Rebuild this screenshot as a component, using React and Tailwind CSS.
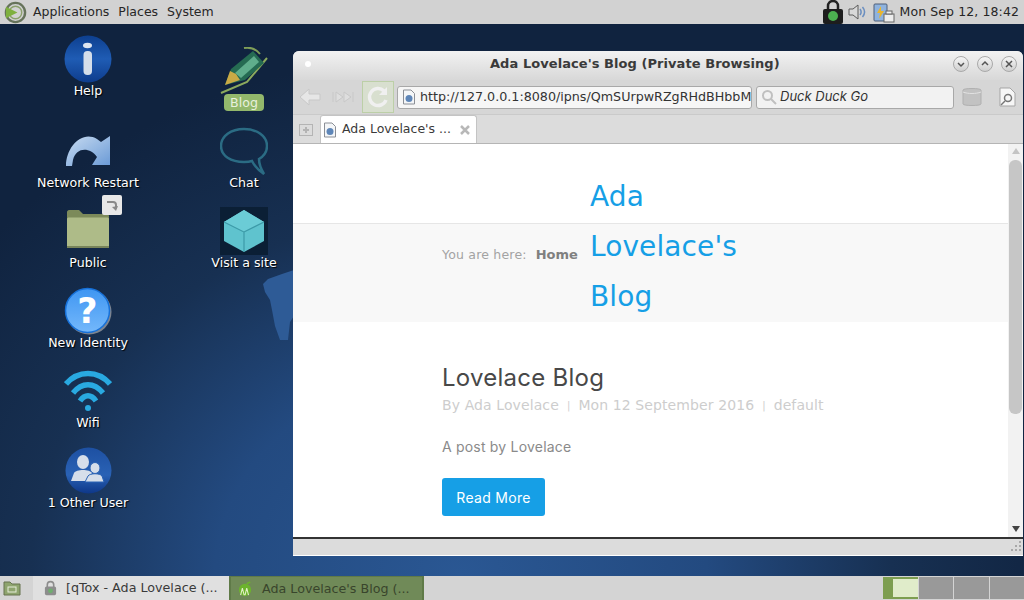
const dejavu = "font-['DejaVu_Sans',sans-serif]";

function HelpIcon() {
  return (
    <svg viewBox="0 0 48 48" className="h-12 w-12">
      <defs>
        <linearGradient id="helpBlue" x1="0" y1="0" x2="0" y2="1">
          <stop offset="0" stopColor="#0d3f8f" />
          <stop offset="0.5" stopColor="#1f5cb4" />
          <stop offset="1" stopColor="#0e3c8c" />
        </linearGradient>
      </defs>
      <circle cx="24" cy="24" r="23.5" fill="url(#helpBlue)" />
      <ellipse cx="23.5" cy="10.5" rx="4.5" ry="2.8" fill="#dfe6f0" />
      <rect x="19.5" y="16" width="8.5" height="24" rx="4" fill="#d5deea" />
    </svg>
  );
}

function RestartIcon() {
  return (
    <svg viewBox="0 0 48 48" className="h-12 w-12">
      <defs>
        <linearGradient id="restartBlue" x1="0" y1="0" x2="1" y2="1">
          <stop offset="0" stopColor="#c9dcf1" />
          <stop offset="1" stopColor="#6a9ad6" />
        </linearGradient>
      </defs>
      <path d="M2 39C2 20 18 3 33 12L37 15L46 9V38H28L33 30C26 20 12 20 9 33L8 39Z" fill="url(#restartBlue)" />
    </svg>
  );
}

function FolderIcon() {
  return (
    <svg viewBox="0 0 48 48" className="h-12 w-12">
      <path d="M3 5C3 4 4 3 5 3H15L19 7H43C44 7 45 8 45 9V20H3Z" fill="#7c8a5a" />
      <path d="M3 12C3 11 4 10.500 5 10.500H43C44 10.500 45 11 45 12V39C45 40 44 41 43 41H5C4 41 3 40 3 39Z" fill="#aebb88" />
      <rect x="3" y="39" width="42" height="2" fill="#78845a" />
    </svg>
  );
}

function QuestionIcon() {
  return (
    <svg viewBox="0 0 48 48" className="h-12 w-12">
      <defs>
        <linearGradient id="questionBlue" x1="0" y1="0" x2="0" y2="1">
          <stop offset="0" stopColor="#3f96f2" />
          <stop offset="1" stopColor="#74b8fb" />
        </linearGradient>
      </defs>
      <circle cx="25" cy="25" r="22.500" fill="#7c8490" />
      <circle cx="23.500" cy="23.500" r="22" fill="url(#questionBlue)" stroke="#1670d8" strokeWidth="1.500" />
      <text x="23.500" y="36" textAnchor="middle" fontFamily="'DejaVu Sans', sans-serif" fontWeight="700" fontSize="35" fill="#ffffff">?</text>
    </svg>
  );
}

function WifiIcon() {
  return (
    <svg viewBox="0 0 48 48" className="h-12 w-12" fill="none" stroke="#29a9e1" strokeWidth="5.500">
      <path d="M2 17C14 3 34 3 46 17" />
      <path d="M9 26C18 15 30 15 39 26" />
      <path d="M16 34C21 27 27 27 32 34" />
      <circle cx="24" cy="41" r="3" fill="#29a9e1" stroke="none" />
    </svg>
  );
}

function UsersIcon() {
  return (
    <svg viewBox="0 0 48 48" className="h-12 w-12">
      <defs>
        <linearGradient id="usersBlue" x1="0" y1="0" x2="0" y2="1">
          <stop offset="0" stopColor="#1d50a2" />
          <stop offset="0.6" stopColor="#2a62b5" />
          <stop offset="1" stopColor="#0e3788" />
        </linearGradient>
      </defs>
      <circle cx="24.500" cy="23.500" r="23" fill="url(#usersBlue)" />
      <ellipse cx="19" cy="15" rx="6" ry="7" fill="#d6deea" />
      <path d="M7 34L10 26C12 22 26 22 28 26L24 34Z" fill="#d6deea" />
      <ellipse cx="31" cy="21" rx="5" ry="5.500" fill="#d6deea" stroke="#2a62b5" strokeWidth="1" />
      <path d="M21 35L24 29C26 26 36 26 38 29L40 35Z" fill="#d6deea" stroke="#2a62b5" strokeWidth="1" />
    </svg>
  );
}

function PencilIcon() {
  return (
    <svg viewBox="0 0 48 48" className="h-12 w-12">
      <path d="M1 46L27 35L47 11" fill="none" stroke="#8ba95d" strokeWidth="2" />
      <path d="M5 38L11 22L33 4L44 16L25 33Z" fill="#256b52" />
      <path d="M15 26L34 9L39 15L21 31Z" fill="#5fae8c" />
      <path d="M5 38L10 24L16 27L20 33Z" fill="#c9aa45" />
      <path d="M24 1C30 0 36 2 40 7" fill="none" stroke="#7f9e58" strokeWidth="2" />
    </svg>
  );
}

function ChatIcon() {
  return (
    <svg viewBox="0 0 48 48" className="h-12 w-12" fill="none" stroke="#2b6c84" strokeWidth="2.500">
      <path d="M24 2C11 2 1 9 1 19C1 29 11 35 24 35C27 35 29 35 32 34C34 38 38 43 44 47C41 42 39 36 39 32C44 29 47 24 47 19C47 9 37 2 24 2Z" />
    </svg>
  );
}

function CubeIcon() {
  return (
    <svg viewBox="0 0 48 48" className="h-12 w-12">
      <rect width="48" height="48" fill="#0b1f35" />
      <path d="M24 3L44 15V34L24 45L4 34V15Z" fill="#5fc3ce" />
      <path d="M24 3L44 15L24 25L4 15Z" fill="#6bccd6" />
      <path d="M4 15L24 25V45M44 15L24 25" fill="none" stroke="#3c9aa8" strokeWidth="1.200" />
    </svg>
  );
}

function DesktopIcon({ className, label, selected, children }) {
  return (
    <div className={`absolute flex w-[130px] flex-col items-center ${className}`}>
      {children}
      <span
        className={`mt-[-1px] h-[17px] whitespace-nowrap text-[12.600px] leading-[17px] ${selected ? "rounded-[4px] bg-[#93b86c] px-[6px] text-[#e8f0dc]" : "text-white [text-shadow:1px_1px_1px_#000]"}`}
      >
        {label}
      </span>
    </div>
  );
}

function PageFavicon() {
  return (
    <svg viewBox="0 0 14 16" className="h-4 w-[14px] shrink-0">
      <path d="M1.500 1H9L12.500 4.500V15H1.500Z" fill="#f4f6f8" stroke="#8b8f96" />
      <circle cx="7" cy="9.500" r="3.500" fill="#5e86b8" />
    </svg>
  );
}

function WindowButton({ children }) {
  return (
    <span className="flex h-4 w-4 items-center justify-center rounded-full border border-[#a9a9a9] bg-[linear-gradient(#f6f6f6,#cfcfcf)]">
      <svg viewBox="0 0 10 10" className="h-2.5 w-2.5" fill="none" stroke="#555" strokeWidth="1.500">
        {children}
      </svg>
    </span>
  );
}

function Browser() {
  return (
    <div className="absolute left-[293px] top-[51px] flex h-[505px] w-[730px] flex-col overflow-hidden rounded-t-[6px] bg-[#dcdcdc]">
      <div className="flex h-[29px] shrink-0 items-center bg-[linear-gradient(#f2f2f2,#d8d8d8)] pb-[4px] pl-[12px] pr-[6px]">
        <span className="h-[6px] w-[6px] rounded-full bg-white" />
        <span className="ml-[179px] whitespace-nowrap text-[13px] font-bold tracking-[0.06px] text-[#3a3a3a]">
          Ada Lovelace's Blog (Private Browsing)
        </span>
        <div className="ml-auto flex gap-2">
          <WindowButton><path d="M2 4L5 7L8 4" /></WindowButton>
          <WindowButton><path d="M2 6L5 3L8 6" /></WindowButton>
          <WindowButton><path d="M2 2L8 8M8 2L2 8" /></WindowButton>
        </div>
      </div>

      <div className="flex h-[35px] shrink-0 items-center border-b border-[#cacaca] bg-[#d6d6d6] pl-[5px]">
        <svg viewBox="0 0 24 20" className="h-5 w-6 shrink-0" fill="#e6e6e6" stroke="#c8c8c8">
          <path d="M11 2L2 10L11 18V13H22V7H11Z" />
        </svg>
        <svg viewBox="0 0 22 12" className="ml-[10px] h-3 w-[22px] shrink-0" fill="#dedede" stroke="#c8c8c8">
          <path d="M1 1V11M4 1L11 6L4 11ZM12 1L19 6L12 11ZM21 1V11" />
        </svg>
        <div className="ml-[8px] flex h-[32px] w-[32px] shrink-0 items-center justify-center border border-[#bccfa7] bg-[#d8dfcf]">
          <svg viewBox="0 0 24 24" className="h-6 w-6" fill="none" stroke="#f0f0f0" strokeWidth="3.500">
            <path d="M20 15A8.500 8.500 0 1 1 18 6" />
            <path d="M21 2V10H13Z" fill="#f0f0f0" stroke="none" />
          </svg>
        </div>
        <div className="ml-[3px] flex h-[23px] w-[355px] shrink-0 items-center gap-[4px] overflow-hidden rounded-[3px] border border-[#a8a8a8] bg-[#f6f6f6] pl-[4px] text-[12.700px] text-[#333]">
          <PageFavicon />
          <span className="whitespace-nowrap">http://127.0.0.1:8080/ipns/QmSUrpwRZgRHdBHbbM</span>
        </div>
        <div className="ml-[4px] flex h-[23px] w-[198px] shrink-0 items-center gap-[3px] rounded-[3px] border border-[#a8a8a8] bg-[#f2f2f2] pl-[4px] text-[13px] italic text-[#333]">
          <svg viewBox="0 0 16 16" className="h-4 w-4 shrink-0" fill="none" stroke="#c0c0c0" strokeWidth="2">
            <circle cx="6.500" cy="6.500" r="4.500" />
            <path d="M10 10L15 15" />
          </svg>
          <span className="font-['Inter',sans-serif]">Duck Duck Go</span>
        </div>
        <svg viewBox="0 0 20 20" className="ml-[8px] h-5 w-5 shrink-0">
          <path d="M1 3C1 1 19 1 19 3V17C19 19 1 19 1 17Z" fill="#c2c2c2" stroke="#b0b0b0" />
          <path d="M1 5C6 7 14 7 19 5" fill="none" stroke="#e2e2e2" />
        </svg>
        <svg viewBox="0 0 20 20" className="ml-[15px] h-5 w-5 shrink-0">
          <path d="M3 1H13L18 6V19H3Z" fill="#f6f6f6" stroke="#a5a5a5" />
          <circle cx="11" cy="11" r="3.500" fill="none" stroke="#777" strokeWidth="1.500" />
          <path d="M8 14L4 18" stroke="#777" strokeWidth="1.500" />
        </svg>
      </div>

      <div className="flex h-[28px] shrink-0 items-end bg-[#dcdcdc] pl-[6px]">
        <svg viewBox="0 0 14 14" className="mb-[6px] h-3.5 w-3.5 shrink-0" fill="none" stroke="#b4b4b4">
          <rect x="0.500" y="1.500" width="13" height="11" />
          <path d="M7 4V10M4 7H10" strokeWidth="2" />
        </svg>
        <div className="ml-[7px] flex h-[28px] w-[157px] shrink-0 items-center rounded-t-[3px] border-x border-t border-[#c4c4c4] bg-white pl-[2px] text-[12.500px]">
          <div className="flex items-center gap-[5px] text-[#3a3a3a]">
            <PageFavicon />
            <span className="whitespace-nowrap">Ada Lovelace's ...</span>
          </div>
          <svg viewBox="0 0 10 10" className="ml-[9px] h-2.5 w-2.5" stroke="#b8b8b8" strokeWidth="2.500">
            <path d="M1 1L9 9M9 1L1 9" />
          </svg>
        </div>
      </div>

      <div className="flex min-h-0 flex-1 border-t border-[#b5b5b5] bg-white">
        <div className="min-w-0 flex-1 pt-[79px]">
          <div className="flex h-[99px] border-t border-[#e6e6e6] bg-[#f8f8f8] pl-[149px]">
            <div className="mt-[22px] flex h-[18px] w-[148px] shrink-0 items-center whitespace-nowrap text-[12.500px]">
              <span className="tracking-[0.2px] text-[#a3a3a3]">You are here:</span>
              <span className="ml-[9px] text-[13px] font-bold text-[#808080]">Home</span>
            </div>
            <div className="mt-[-52px] h-[150px] text-[28px] leading-[50px] tracking-[0.1px] text-[#169fe6]">
              <div>Ada</div>
              <div>Lovelace's</div>
              <div>Blog</div>
            </div>
          </div>
          <div className="pl-[149px] pt-[39px]">
            <h2 className="font-['Inter',sans-serif] text-[24px] leading-[34px] tracking-[0.25px] text-[#484848]">Lovelace Blog</h2>
            <div className="flex h-[20px] items-center whitespace-nowrap text-[14px] tracking-[0.1px] text-[#cdcdcd]">
              <span>By Ada Lovelace</span>
              <span className="mx-[8px] text-[10px]">|</span>
              <span>Mon 12 September 2016</span>
              <span className="mx-[8px] text-[10px]">|</span>
              <span>default</span>
            </div>
            <p className="mt-[22px] h-[20px] font-['Inter',sans-serif] text-[14px] leading-[20px] tracking-[0.2px] text-[#8a8a8a]">A post by Lovelace</p>
            <button className="mt-[21px] flex h-[38px] w-[103px] items-center justify-center rounded-[3px] bg-[#169fe6] font-['Inter',sans-serif] text-[14px] tracking-[0.3px] text-white">
              Read More
            </button>
          </div>
        </div>

        <div className="flex w-[15px] shrink-0 flex-col items-center bg-[#f2f2f2] pb-[5px] pt-[4px]">
          <span className="h-0 w-0 border-x-[4px] border-b-[6px] border-x-transparent border-b-[#c4c4c4]" />
          <span className="mt-[6px] h-[254px] w-[13px] rounded-[6px] bg-[#c6c6c6]" />
          <span className="mt-auto h-0 w-0 border-x-[4px] border-t-[6px] border-x-transparent border-t-[#444]" />
        </div>
      </div>

      <div className="flex h-[19px] shrink-0 justify-end border-t-2 border-b border-t-[#333] border-b-white bg-[#dcdcdc]">
        <svg viewBox="0 0 12 12" className="mr-[1px] mt-[2px] h-3 w-3" fill="#a8a8a8">
          <rect x="9" y="0" width="2" height="2" />
          <rect x="9" y="4" width="2" height="2" />
          <rect x="5" y="4" width="2" height="2" />
          <rect x="9" y="8" width="2" height="2" />
          <rect x="5" y="8" width="2" height="2" />
          <rect x="1" y="8" width="2" height="2" />
        </svg>
      </div>
    </div>
  );
}

function TopPanel() {
  return (
    <div className="flex h-6 shrink-0 items-center bg-[#d2d2d2] text-[12.500px] text-[#262626]">
      <svg viewBox="0 0 24 24" className="ml-[4px] h-[23px] w-[23px]">
        <circle cx="12" cy="12" r="10" fill="none" stroke="#66735a" strokeWidth="2.500" />
        <circle cx="12" cy="12" r="6.500" fill="none" stroke="#8ba06d" strokeWidth="1.500" />
        <path d="M2 6L14 12L2 18Z" fill="#7fb03f" />
      </svg>
      <span className="ml-[6px]">Applications</span>
      <span className="ml-[9px]">Places</span>
      <span className="ml-[9px]">System</span>
      <svg viewBox="0 0 20 24" className="ml-auto h-6 w-5">
        <path d="M5 11V6A5 5 0 0 1 15 6V11" fill="none" stroke="#222" strokeWidth="2.500" />
        <rect x="0" y="9" width="20" height="15" rx="2" fill="#1d1d1d" />
        <circle cx="10" cy="16" r="5" fill="#4cb050" />
      </svg>
      <svg viewBox="0 0 20 20" className="ml-[4px] h-5 w-5">
        <path d="M2 7H6L11 3V17L6 13H2Z" fill="#d8d8d8" stroke="#5c5c5c" />
        <path d="M13 7C14.500 9 14.500 11 13 13M15.500 5C18 8 18 12 15.500 15" fill="none" stroke="#6b8fc0" strokeWidth="1.500" />
      </svg>
      <svg viewBox="0 0 22 22" className="ml-[6px] h-[22px] w-[22px]">
        <rect x="1" y="3" width="13" height="17" rx="1" fill="#8fb3de" stroke="#4e5f78" />
        <path d="M8 5L4 12H7L6 18L11 10H8Z" fill="#e8b52f" />
        <rect x="11" y="13" width="10" height="8" fill="#ededed" stroke="#666" />
        <rect x="13" y="10" width="6" height="3" fill="#ededed" stroke="#666" />
      </svg>
      <span className="ml-[5px] mr-[5px] tracking-[0.1px]">Mon Sep 12, 18:42</span>
    </div>
  );
}

function BottomPanel() {
  return (
    <div className="flex h-6 shrink-0 items-center bg-[#d4d4d4] text-[12.700px]">
      <svg viewBox="0 0 18 18" className="ml-[3px] h-[18px] w-[18px] shrink-0">
        <path d="M1 3H7L9 5H17V16H1Z" fill="#8ea46e" stroke="#66734f" />
        <rect x="5" y="8" width="8" height="5" fill="none" stroke="#e6ecd9" />
      </svg>
      <div className="ml-[12px] flex h-6 w-[196px] shrink-0 items-center bg-[#e0e0e0] pl-[10px] text-[#3a3a3a]">
        <svg viewBox="0 0 16 20" className="h-4 w-[15px] shrink-0">
          <path d="M4 9V6A4 4 0 0 1 12 6V9" fill="none" stroke="#8d8d8d" strokeWidth="2" />
          <rect x="1" y="8" width="14" height="11" rx="2" fill="#8d8d8d" />
          <circle cx="8" cy="13.500" r="3" fill="#6fae6f" />
        </svg>
        <span className="ml-[8px] whitespace-nowrap">[qTox - Ada Lovelace (...</span>
      </div>
      <div className="flex h-6 w-[195px] shrink-0 items-center border-x-2 border-t border-[#5f7a48] bg-[#708a58] pl-[7px] text-[#39452c]">
        <svg viewBox="0 0 16 18" className="h-4 w-[14px] shrink-0">
          <circle cx="8" cy="10" r="7" fill="#6cb32d" />
          <path d="M3 16L5 8L7 16M8 16L10 8L12 16" fill="none" stroke="#e4f2c8" strokeWidth="1.200" />
          <path d="M10 3L14 1" stroke="#6cb32d" strokeWidth="2" />
        </svg>
        <span className="ml-[10px] whitespace-nowrap">Ada Lovelace's Blog (...</span>
      </div>
      <div className="ml-auto flex h-[22px] w-[141px] shrink-0 gap-[1px]">
        <div className="flex w-[35px] bg-[#7d9e50]">
          <div className="ml-[10px] mt-[2px] h-[18px] flex-1 bg-[#e0ecca]" />
        </div>
        <div className="flex-1 bg-[#999999]" />
        <div className="flex-1 bg-[#999999]" />
        <div className="flex-1 bg-[#999999]" />
      </div>
    </div>
  );
}

export default function App() {
  return (
    <div className={`relative flex h-[600px] w-[1024px] flex-col overflow-hidden ${dejavu}`}>
      <TopPanel />
      <div className="relative min-h-0 flex-1 bg-[radial-gradient(ellipse_60%_95%_at_45%_100%,#2a5793_0%,#234a80_40%,#173052_70%,#10233f_100%)]">
        <svg viewBox="0 0 32 72" className="absolute left-[262px] top-[246px] h-[72px] w-[32px]">
          <path d="M32 0L20 4L6 9L1 14L3 22L8 30L10 40L13 56L18 70L26 70L28 52L32 46Z" fill="#2e5b96" />
        </svg>
      </div>
      <BottomPanel />
      <DesktopIcon className="left-[23px] top-[35px]" label="Help"><HelpIcon /></DesktopIcon>
      <DesktopIcon className="left-[23px] top-[127px]" label="Network Restart"><RestartIcon /></DesktopIcon>
      <DesktopIcon className="left-[23px] top-[207px]" label="Public"><FolderIcon /></DesktopIcon>
      <DesktopIcon className="left-[23px] top-[287px]" label="New Identity"><QuestionIcon /></DesktopIcon>
      <DesktopIcon className="left-[23px] top-[367px]" label="Wifi"><WifiIcon /></DesktopIcon>
      <DesktopIcon className="left-[23px] top-[447px]" label="1 Other User"><UsersIcon /></DesktopIcon>
      <DesktopIcon className="left-[179px] top-[47px]" label="Blog" selected><PencilIcon /></DesktopIcon>
      <DesktopIcon className="left-[179px] top-[127px]" label="Chat"><ChatIcon /></DesktopIcon>
      <DesktopIcon className="left-[179px] top-[207px]" label="Visit a site"><CubeIcon /></DesktopIcon>
      <span className="absolute left-[102px] top-[195px] flex h-5 w-5 items-center justify-center rounded-[2px] bg-[#e8e8e8]">
        <svg viewBox="0 0 14 14" className="h-3.5 w-3.5" fill="none" stroke="#8a8a8a" strokeWidth="2">
          <path d="M2 4H8C10 4 11 5 11 7V11" />
          <path d="M7 9L11 13L13 8Z" fill="#8a8a8a" stroke="none" />
        </svg>
      </span>
      <Browser />
    </div>
  );
}
